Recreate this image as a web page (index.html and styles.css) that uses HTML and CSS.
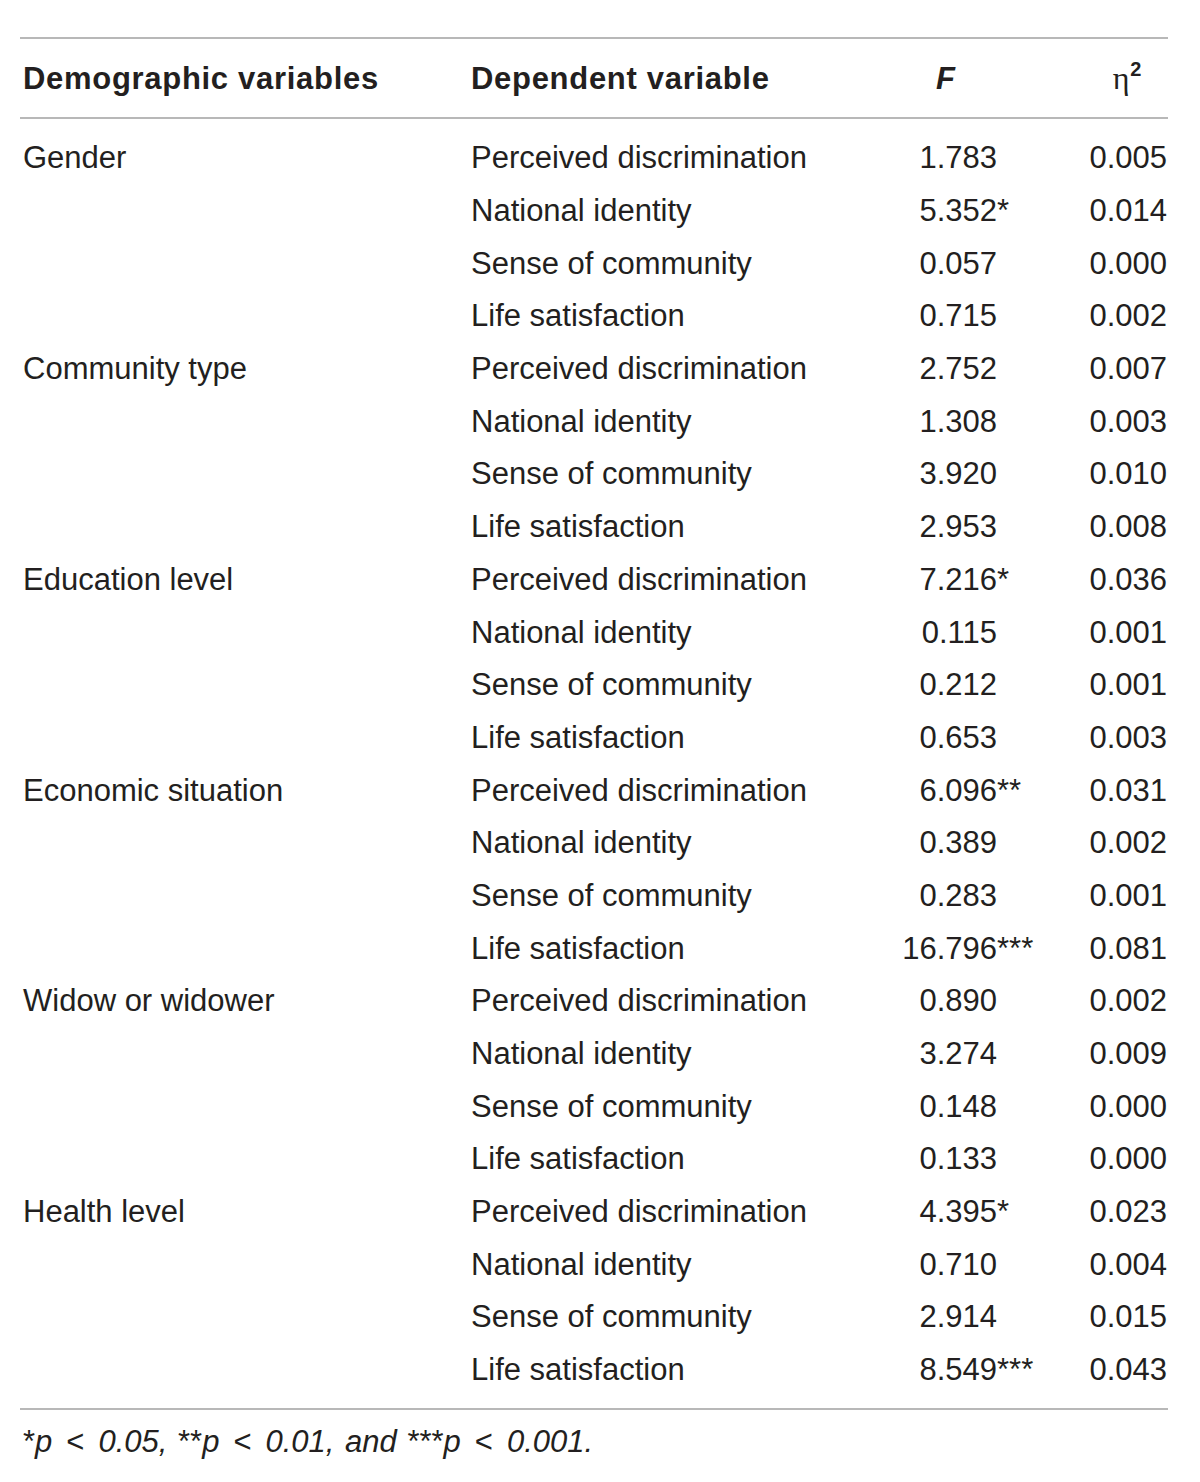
FILE: index.html
```html
<!DOCTYPE html>
<html>
<head>
<meta charset="utf-8">
<link rel="stylesheet" href="styles.css">
</head>
<body>
<div class="wrap">
<div class="tbl">
<div class="row head">
<div class="c1">Demographic variables</div><div class="c2">Dependent variable</div><div class="c3 fh"><i>F</i></div><div class="c4 eh"><span class="eta">η</span><sup>2</sup></div>
</div>
<div class="body">
<div class="row"><div class="c1">Gender</div><div class="c2">Perceived discrimination</div><div class="c3">1.783</div><div class="c4">0.005</div></div>
<div class="row"><div class="c1"></div><div class="c2">National identity</div><div class="c3">5.352<span class="s">*</span></div><div class="c4">0.014</div></div>
<div class="row"><div class="c1"></div><div class="c2">Sense of community</div><div class="c3">0.057</div><div class="c4">0.000</div></div>
<div class="row"><div class="c1"></div><div class="c2">Life satisfaction</div><div class="c3">0.715</div><div class="c4">0.002</div></div>
<div class="row"><div class="c1">Community type</div><div class="c2">Perceived discrimination</div><div class="c3">2.752</div><div class="c4">0.007</div></div>
<div class="row"><div class="c1"></div><div class="c2">National identity</div><div class="c3">1.308</div><div class="c4">0.003</div></div>
<div class="row"><div class="c1"></div><div class="c2">Sense of community</div><div class="c3">3.920</div><div class="c4">0.010</div></div>
<div class="row"><div class="c1"></div><div class="c2">Life satisfaction</div><div class="c3">2.953</div><div class="c4">0.008</div></div>
<div class="row"><div class="c1">Education level</div><div class="c2">Perceived discrimination</div><div class="c3">7.216<span class="s">*</span></div><div class="c4">0.036</div></div>
<div class="row"><div class="c1"></div><div class="c2">National identity</div><div class="c3">0.115</div><div class="c4">0.001</div></div>
<div class="row"><div class="c1"></div><div class="c2">Sense of community</div><div class="c3">0.212</div><div class="c4">0.001</div></div>
<div class="row"><div class="c1"></div><div class="c2">Life satisfaction</div><div class="c3">0.653</div><div class="c4">0.003</div></div>
<div class="row"><div class="c1">Economic situation</div><div class="c2">Perceived discrimination</div><div class="c3">6.096<span class="s">**</span></div><div class="c4">0.031</div></div>
<div class="row"><div class="c1"></div><div class="c2">National identity</div><div class="c3">0.389</div><div class="c4">0.002</div></div>
<div class="row"><div class="c1"></div><div class="c2">Sense of community</div><div class="c3">0.283</div><div class="c4">0.001</div></div>
<div class="row"><div class="c1"></div><div class="c2">Life satisfaction</div><div class="c3">16.796<span class="s">***</span></div><div class="c4">0.081</div></div>
<div class="row"><div class="c1">Widow or widower</div><div class="c2">Perceived discrimination</div><div class="c3">0.890</div><div class="c4">0.002</div></div>
<div class="row"><div class="c1"></div><div class="c2">National identity</div><div class="c3">3.274</div><div class="c4">0.009</div></div>
<div class="row"><div class="c1"></div><div class="c2">Sense of community</div><div class="c3">0.148</div><div class="c4">0.000</div></div>
<div class="row"><div class="c1"></div><div class="c2">Life satisfaction</div><div class="c3">0.133</div><div class="c4">0.000</div></div>
<div class="row"><div class="c1">Health level</div><div class="c2">Perceived discrimination</div><div class="c3">4.395<span class="s">*</span></div><div class="c4">0.023</div></div>
<div class="row"><div class="c1"></div><div class="c2">National identity</div><div class="c3">0.710</div><div class="c4">0.004</div></div>
<div class="row"><div class="c1"></div><div class="c2">Sense of community</div><div class="c3">2.914</div><div class="c4">0.015</div></div>
<div class="row"><div class="c1"></div><div class="c2">Life satisfaction</div><div class="c3">8.549<span class="s">***</span></div><div class="c4">0.043</div></div>
</div>
</div>
<p class="note">*<i>p</i><span class="lt">&lt;</span><i>0.05,</i> **<i>p</i><span class="lt">&lt;</span><i>0.01, and</i> ***<i>p</i><span class="lt">&lt;</span><i>0.001.</i></p>
</div>
</body>
</html>
```
FILE: styles.css
```css
html, body {
  margin: 0;
  padding: 0;
  background: #fff;
}
body {
  font-family: "Liberation Sans", Arial, sans-serif;
  color: #231f20;
}
.wrap {
  padding: 37px 32px 0 20px;
}
.tbl {
  width: 1148px;
  border-top: 2px solid #b8b8b8;
  border-bottom: 2px solid #b8b8b8;
  font-size: 31px;
}
.row {
  display: flex;
  height: 52.7px;
  align-items: center;
  white-space: nowrap;
}
.c1 { width: 448px; padding-left: 3px; box-sizing: border-box; }
.c2 { width: 400px; padding-left: 3px; box-sizing: border-box; }
.c3 { width: 129px; text-align: right; }
.c4 { width: 171px; text-align: right; padding-right: 1px; box-sizing: border-box; }
.head {
  height: 77px;
  border-bottom: 2px solid #b8b8b8;
  font-weight: bold;
  font-size: 31px;
  letter-spacing: 0.7px;
  padding-top: 1px;
}
.head .fh {
  text-align: left;
  padding-left: 68px;
  box-sizing: border-box;
}
.head .eh {
  text-align: right;
  padding-right: 26px;
  font-weight: normal;
}
.eta {
  font-family: "Liberation Serif", "Times New Roman", serif;
  font-size: 32px;
}
sup {
  font-size: 20px;
  font-weight: bold;
  vertical-align: 13px;
  line-height: 0;
}
.body {
  padding: 13px 0 11px;
}
.s {
  display: inline-block;
  width: 0;
  overflow: visible;
  text-align: left;
}
.note {
  margin: 11px 0 0 3px;
  font-size: 31px;
  line-height: 42px;
  word-spacing: 2px;
}
.lt {
  margin: 0 14px;
}
```
